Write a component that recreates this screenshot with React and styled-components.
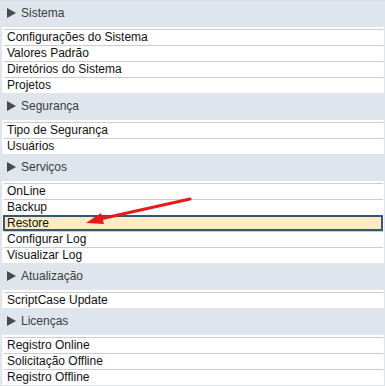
import React from "react";
import styled, { createGlobalStyle } from "styled-components";

const Global = createGlobalStyle`
  html, body { margin: 0; padding: 0; background: #dfe5ec; }
  body { font-family: "Liberation Sans", Arial, sans-serif; }
`;

const Menu = styled.div`
  width: 385px;
  height: 386px;
  overflow: hidden;
  background: #dfe5ec;
  border-top: 1px solid #d3dbe5;
  box-sizing: border-box;
`;

const Header = styled.div`
  height: ${(p) => (p.$first ? 26 : 27)}px;
  box-sizing: border-box;
  display: flex;
  align-items: center;
  gap: 5px;
  padding: 0 0 ${(p) => (p.$first ? 2 : 1)}px 7px;
  font-size: 12px;
  color: #3c3c3c;
`;

const Panel = styled.div`
  background: #fff;
  margin: 0 1px 0 2px;
  padding: 2px 1px 0 2px;
`;

const Row = styled.div`
  height: 16px;
  box-sizing: border-box;
  display: flex;
  align-items: center;
  font-size: 12px;
  color: #111;
  padding: 0 0 1px ${(p) => (p.$active ? 2 : 3)}px;
  border-top: 1px solid #cccccc;
  ${(p) =>
    p.$active &&
    `
    background: #fdebc4;
    border: 2px solid #3a5572;
    padding-bottom: 0;
    margin-left: -1px;
  `}
`;

const Overlay = styled.svg`
  position: absolute;
  left: 0;
  top: 0;
  pointer-events: none;
`;

const Wrap = styled.div`
  position: relative;
`;

const Tri = () => (
  <svg width="9" height="10" viewBox="0 0 9 10">
    <polygon points="0,0 9,5 0,10" fill="#4a4a4a" />
  </svg>
);

const sections = [
  { title: "Sistema", items: ["Configurações do Sistema", "Valores Padrão", "Diretórios do Sistema", "Projetos"] },
  { title: "Segurança", items: ["Tipo de Segurança", "Usuários"] },
  { title: "Serviços", items: ["OnLine", "Backup", "Restore", "Configurar Log", "Visualizar Log"] },
  { title: "Atualização", items: ["ScriptCase Update"] },
  { title: "Licenças", items: ["Registro Online", "Solicitação Offline", "Registro Offline"] },
];

export default function App() {
  return (
    <Wrap>
      <Global />
      <Menu>
        {sections.map((s, i) => (
          <React.Fragment key={s.title}>
            <Header $first={i === 0}>
              <Tri />
              <span>{s.title}</span>
            </Header>
            <Panel>
              {s.items.map((it) => (
                <Row key={it} $active={it === "Restore"}>
                  {it}
                </Row>
              ))}
            </Panel>
          </React.Fragment>
        ))}
      </Menu>
      <Overlay width="385" height="386">
        <line x1="190" y1="199" x2="100" y2="219" stroke="#e8191b" strokeWidth="3" strokeLinecap="round" />
        <polygon points="86,223 101,213 104,224" fill="#e8191b" />
      </Overlay>
    </Wrap>
  );
}
